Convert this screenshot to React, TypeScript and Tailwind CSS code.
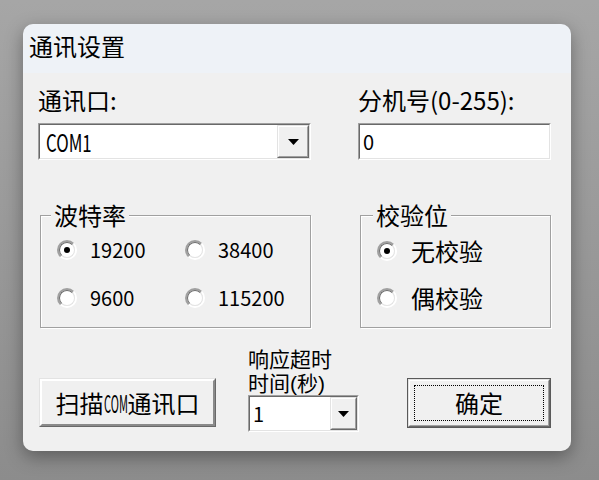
import React from "react";

function Sunken({ className = "", children }: { className?: string; children?: React.ReactNode }) {
  return (
    <div className={"border border-t-[#a0a0a0] border-l-[#a0a0a0] border-b-white border-r-white " + className}>
      <div className="h-full w-full border border-t-[#696969] border-l-[#696969] border-b-[#e3e3e3] border-r-[#e3e3e3] bg-white flex">
        {children}
      </div>
    </div>
  );
}

function DropBtn({ className = "" }: { className?: string }) {
  return (
    <div className={"h-full shrink-0 border border-t-[#e3e3e3] border-l-[#e3e3e3] border-b-[#696969] border-r-[#696969] " + className}>
      <div className="h-full w-full border border-t-white border-l-white border-b-[#a0a0a0] border-r-[#a0a0a0] bg-[#f0f0f0] flex items-center justify-center">
        <svg width="11" height="6" viewBox="0 0 11 6">
          <polygon points="0,0 11,0 5.5,6" fill="#000" />
        </svg>
      </div>
    </div>
  );
}

function Radio({ checked = false }: { checked?: boolean }) {
  return (
    <div className="w-[20px] h-[20px] shrink-0 rounded-full border-2 border-t-[#a0a0a0] border-l-[#a0a0a0] border-b-white border-r-white">
      <div className="w-full h-full rounded-full border border-t-[#6e6e6e] border-l-[#6e6e6e] border-b-[#e3e3e3] border-r-[#e3e3e3] bg-white flex items-center justify-center">
        {checked && <div className="w-[6px] h-[6px] rounded-full bg-black" />}
      </div>
    </div>
  );
}

function RadioItem({ checked = false, label, cjk = false }: { checked?: boolean; label: string; cjk?: boolean }) {
  return (
    <div className={"h-[32px] flex items-center " + (cjk ? "gap-[14px]" : "gap-[13px]")}>
      <Radio checked={checked} />
      <span className={cjk ? "text-[24px] leading-[28px]" : "text-[20px] leading-[24px]"}>{label}</span>
    </div>
  );
}

export default function App() {
  return (
    <div className="w-[599px] h-[480px] overflow-hidden bg-gradient-to-b from-[#a6a6a6] to-[#8c8c8c] pt-[24px] pl-[23px] text-black font-['Noto_Sans_CJK_SC','Liberation_Sans',sans-serif]">
      <div className="w-[548px] h-[427px] rounded-[10px] overflow-hidden flex flex-col shadow-[0_6px_18px_rgba(0,0,0,0.35)]">
        <div className="h-[49px] shrink-0 bg-[#eef2f7] pl-[6px] pb-[5px] flex items-center text-[24px] leading-[24px]">
          通讯设置
        </div>
        <div className="flex-1 bg-[#f0f0f0] px-[15px] pt-[13px]">
          {/* Row 1 */}
          <div className="flex gap-[47px]">
            <div className="w-[273px]">
              <div className="text-[24px] leading-[28px]">通讯口:</div>
              <Sunken className="mt-[9px] h-[37px]">
                <div className="flex-1 flex items-center pl-[6px] overflow-hidden">
                  <span className="inline-block origin-left scale-x-[0.7] text-[24px] leading-[28px] whitespace-nowrap">COM1</span>
                </div>
                <DropBtn className="w-[32px]" />
              </Sunken>
            </div>
            <div className="w-[193px]">
              <div className="text-[24px] leading-[28px] whitespace-nowrap">分机号(0-255):</div>
              <Sunken className="mt-[9px] h-[37px]">
                <div className="flex items-center pl-[3px] text-[20px] leading-[24px]">0</div>
              </Sunken>
            </div>
          </div>

          {/* Row 2: groups */}
          <div className="flex mt-[41px]">
            <fieldset className="ml-[2px] w-[271px] h-[127px] border border-[#a0a0a0] shadow-[inset_1px_1px_0_#fff,1px_1px_0_#fff]">
              <legend className="ml-[10px] px-[3px] bg-[#f0f0f0] text-[24px] leading-[28px]">波特率</legend>
              <div className="pt-[5px] pl-[16px] grid grid-cols-[128px_auto] gap-y-[16px]">
                <RadioItem checked label="19200" />
                <RadioItem label="38400" />
                <RadioItem label="9600" />
                <RadioItem label="115200" />
              </div>
            </fieldset>
            <fieldset className="ml-[49px] w-[191px] h-[127px] border border-[#a0a0a0] shadow-[inset_1px_1px_0_#fff,1px_1px_0_#fff]">
              <legend className="ml-[12px] px-[3px] bg-[#f0f0f0] text-[24px] leading-[28px]">校验位</legend>
              <div className="pt-[6px] pl-[16px] flex flex-col gap-[15px]">
                <RadioItem checked cjk label="无校验" />
                <RadioItem cjk label="偶校验" />
              </div>
            </fieldset>
          </div>

          {/* Row 3 */}
          <div className="flex items-start mt-[20px]">
            <div className="ml-[1px] mt-[30px] w-[177px] h-[49px] border border-t-[#e3e3e3] border-l-[#e3e3e3] border-b-[#696969] border-r-[#696969]">
              <div className="w-full h-full border-2 border-t-white border-l-white border-b-[#8a8a8a] border-r-[#8a8a8a] bg-[#f0f0f0] flex items-center justify-center text-[24px] leading-[28px] whitespace-nowrap">
                扫描
                <span className="inline-block w-[24px] overflow-visible">
                  <span className="inline-block origin-left scale-x-[0.46]">COM</span>
                </span>
                通讯口
              </div>
            </div>
            <div className="ml-[32px] w-[111px]">
              <div className="text-[21px] leading-[24px] whitespace-nowrap font-['Liberation_Sans','Noto_Sans_CJK_SC',sans-serif]">
                <div>响应超时</div>
                <div>时间(秒)</div>
              </div>
              <Sunken className="-mt-[1px] h-[37px]">
                <div className="flex-1 flex items-center pl-[3px] text-[20px] leading-[24px]">1</div>
                <DropBtn className="w-[27px]" />
              </Sunken>
            </div>
            <div className="ml-[48px] mt-[30px] w-[144px] h-[50px] border border-[#5a5a5a]">
              <div className="w-full h-full border border-t-[#e3e3e3] border-l-[#e3e3e3] border-b-[#696969] border-r-[#696969]">
                <div className="w-full h-full border border-t-white border-l-white border-b-[#a0a0a0] border-r-[#a0a0a0] bg-[#f0f0f0] p-[4px]">
                  <div className="w-full h-full border border-dotted border-black flex items-center justify-center text-[24px] leading-[28px]">
                    确定
                  </div>
                </div>
              </div>
            </div>
          </div>
        </div>
      </div>
    </div>
  );
}
